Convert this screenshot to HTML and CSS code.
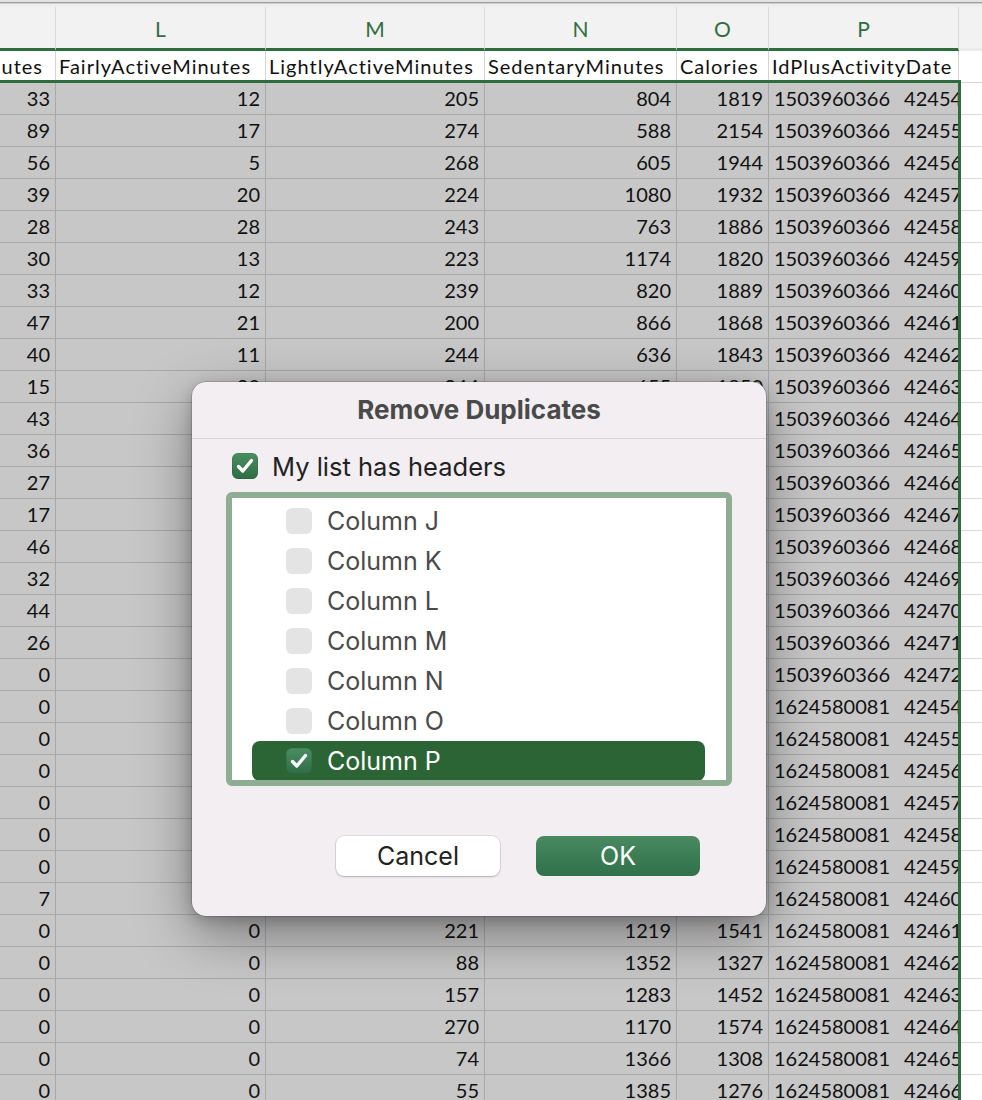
FILE: index.html
```html
<!DOCTYPE html>
<html>
<head>
<meta charset="utf-8">
<link rel="stylesheet" href="styles.css">
</head>
<body>
<div class="app">
  <div class="topstrip"></div>
  <div class="grid colheads">
    <div class="ch sel">K</div>
    <div class="ch sel">L</div>
    <div class="ch sel">M</div>
    <div class="ch sel">N</div>
    <div class="ch sel">O</div>
    <div class="ch sel">P</div>
    <div class="ch q"></div>
  </div>
  <div class="sheet">
    <div class="grid row hdr">
      <div class="c k"><span>VeryActiveMinutes</span></div>
      <div class="c">FairlyActiveMinutes</div>
      <div class="c">LightlyActiveMinutes</div>
      <div class="c">SedentaryMinutes</div>
      <div class="c">Calories</div>
      <div class="c">IdPlusActivityDate</div>
      <div class="c q"></div>
    </div>
    <div class="grid row"><div class="c n">33</div><div class="c n">12</div><div class="c n">205</div><div class="c n">804</div><div class="c n">1819</div><div class="c t">1503960366 424540</div><div class="c q"></div></div>
    <div class="grid row"><div class="c n">89</div><div class="c n">17</div><div class="c n">274</div><div class="c n">588</div><div class="c n">2154</div><div class="c t">1503960366 424550</div><div class="c q"></div></div>
    <div class="grid row"><div class="c n">56</div><div class="c n">5</div><div class="c n">268</div><div class="c n">605</div><div class="c n">1944</div><div class="c t">1503960366 424560</div><div class="c q"></div></div>
    <div class="grid row"><div class="c n">39</div><div class="c n">20</div><div class="c n">224</div><div class="c n">1080</div><div class="c n">1932</div><div class="c t">1503960366 424570</div><div class="c q"></div></div>
    <div class="grid row"><div class="c n">28</div><div class="c n">28</div><div class="c n">243</div><div class="c n">763</div><div class="c n">1886</div><div class="c t">1503960366 424580</div><div class="c q"></div></div>
    <div class="grid row"><div class="c n">30</div><div class="c n">13</div><div class="c n">223</div><div class="c n">1174</div><div class="c n">1820</div><div class="c t">1503960366 424590</div><div class="c q"></div></div>
    <div class="grid row"><div class="c n">33</div><div class="c n">12</div><div class="c n">239</div><div class="c n">820</div><div class="c n">1889</div><div class="c t">1503960366 424600</div><div class="c q"></div></div>
    <div class="grid row"><div class="c n">47</div><div class="c n">21</div><div class="c n">200</div><div class="c n">866</div><div class="c n">1868</div><div class="c t">1503960366 424610</div><div class="c q"></div></div>
    <div class="grid row"><div class="c n">40</div><div class="c n">11</div><div class="c n">244</div><div class="c n">636</div><div class="c n">1843</div><div class="c t">1503960366 424620</div><div class="c q"></div></div>
    <div class="grid row"><div class="c n">15</div><div class="c n">30</div><div class="c n">244</div><div class="c n">655</div><div class="c n">1850</div><div class="c t">1503960366 424630</div><div class="c q"></div></div>
    <div class="grid row"><div class="c n">43</div><div class="c n">10</div><div class="c n">277</div><div class="c n">700</div><div class="c n">2030</div><div class="c t">1503960366 424640</div><div class="c q"></div></div>
    <div class="grid row"><div class="c n">36</div><div class="c n">20</div><div class="c n">215</div><div class="c n">752</div><div class="c n">1860</div><div class="c t">1503960366 424650</div><div class="c q"></div></div>
    <div class="grid row"><div class="c n">27</div><div class="c n">19</div><div class="c n">274</div><div class="c n">806</div><div class="c n">1991</div><div class="c t">1503960366 424660</div><div class="c q"></div></div>
    <div class="grid row"><div class="c n">17</div><div class="c n">14</div><div class="c n">213</div><div class="c n">1196</div><div class="c n">1843</div><div class="c t">1503960366 424670</div><div class="c q"></div></div>
    <div class="grid row"><div class="c n">46</div><div class="c n">13</div><div class="c n">277</div><div class="c n">731</div><div class="c n">1944</div><div class="c t">1503960366 424680</div><div class="c q"></div></div>
    <div class="grid row"><div class="c n">32</div><div class="c n">19</div><div class="c n">252</div><div class="c n">805</div><div class="c n">1991</div><div class="c t">1503960366 424690</div><div class="c q"></div></div>
    <div class="grid row"><div class="c n">44</div><div class="c n">17</div><div class="c n">238</div><div class="c n">715</div><div class="c n">1855</div><div class="c t">1503960366 424700</div><div class="c q"></div></div>
    <div class="grid row"><div class="c n">26</div><div class="c n">44</div><div class="c n">240</div><div class="c n">730</div><div class="c n">1810</div><div class="c t">1503960366 424710</div><div class="c q"></div></div>
    <div class="grid row"><div class="c n">0</div><div class="c n">0</div><div class="c n">0</div><div class="c n">1440</div><div class="c n">1364</div><div class="c t">1503960366 424720</div><div class="c q"></div></div>
    <div class="grid row"><div class="c n">0</div><div class="c n">0</div><div class="c n">217</div><div class="c n">1223</div><div class="c n">1432</div><div class="c t">1624580081 424540</div><div class="c q"></div></div>
    <div class="grid row"><div class="c n">0</div><div class="c n">0</div><div class="c n">123</div><div class="c n">1317</div><div class="c n">1411</div><div class="c t">1624580081 424550</div><div class="c q"></div></div>
    <div class="grid row"><div class="c n">0</div><div class="c n">0</div><div class="c n">116</div><div class="c n">1324</div><div class="c n">1233</div><div class="c t">1624580081 424560</div><div class="c q"></div></div>
    <div class="grid row"><div class="c n">0</div><div class="c n">0</div><div class="c n">158</div><div class="c n">1282</div><div class="c n">1440</div><div class="c t">1624580081 424570</div><div class="c q"></div></div>
    <div class="grid row"><div class="c n">0</div><div class="c n">0</div><div class="c n">135</div><div class="c n">1305</div><div class="c n">1320</div><div class="c t">1624580081 424580</div><div class="c q"></div></div>
    <div class="grid row"><div class="c n">0</div><div class="c n">0</div><div class="c n">103</div><div class="c n">1337</div><div class="c n">1291</div><div class="c t">1624580081 424590</div><div class="c q"></div></div>
    <div class="grid row"><div class="c n">7</div><div class="c n">0</div><div class="c n">211</div><div class="c n">1222</div><div class="c n">1573</div><div class="c t">1624580081 424600</div><div class="c q"></div></div>
    <div class="grid row"><div class="c n">0</div><div class="c n">0</div><div class="c n">221</div><div class="c n">1219</div><div class="c n">1541</div><div class="c t">1624580081 424610</div><div class="c q"></div></div>
    <div class="grid row"><div class="c n">0</div><div class="c n">0</div><div class="c n">88</div><div class="c n">1352</div><div class="c n">1327</div><div class="c t">1624580081 424620</div><div class="c q"></div></div>
    <div class="grid row"><div class="c n">0</div><div class="c n">0</div><div class="c n">157</div><div class="c n">1283</div><div class="c n">1452</div><div class="c t">1624580081 424630</div><div class="c q"></div></div>
    <div class="grid row"><div class="c n">0</div><div class="c n">0</div><div class="c n">270</div><div class="c n">1170</div><div class="c n">1574</div><div class="c t">1624580081 424640</div><div class="c q"></div></div>
    <div class="grid row"><div class="c n">0</div><div class="c n">0</div><div class="c n">74</div><div class="c n">1366</div><div class="c n">1308</div><div class="c t">1624580081 424650</div><div class="c q"></div></div>
    <div class="grid row"><div class="c n">0</div><div class="c n">0</div><div class="c n">55</div><div class="c n">1385</div><div class="c n">1276</div><div class="c t">1624580081 424660</div><div class="c q"></div></div>
    <div class="selection"></div>
  </div>

  <div class="dialog">
    <div class="dlg-title">Remove Duplicates</div>
    <div class="dlg-body">
      <label class="hdr-check">
        <span class="cb on"><svg viewBox="0 0 26 26" width="26" height="26"><path d="M6.5 13.5 L10.8 18 L19.5 7.5" fill="none" stroke="#fff" stroke-width="3.4" stroke-linecap="round" stroke-linejoin="round"/></svg></span>
        <span>My list has headers</span>
      </label>
      <div class="listbox">
        <div class="item"><span class="cb"></span><span>Column J</span></div>
        <div class="item"><span class="cb"></span><span>Column K</span></div>
        <div class="item"><span class="cb"></span><span>Column L</span></div>
        <div class="item"><span class="cb"></span><span>Column M</span></div>
        <div class="item"><span class="cb"></span><span>Column N</span></div>
        <div class="item"><span class="cb"></span><span>Column O</span></div>
        <div class="item active"><span class="cb on"><svg viewBox="0 0 26 26" width="26" height="26"><path d="M6.5 13.5 L10.8 18 L19.5 7.5" fill="none" stroke="#fff" stroke-width="3.4" stroke-linecap="round" stroke-linejoin="round"/></svg></span><span>Column P</span></div>
      </div>
      <div class="buttons">
        <button class="btn cancel">Cancel</button>
        <button class="btn ok">OK</button>
      </div>
    </div>
  </div>
</div>
</body>
</html>
```

FILE: styles.css
```css
* { box-sizing: border-box; }
html, body { margin: 0; padding: 0; }
body {
  width: 982px;
  height: 1100px;
  overflow: hidden;
  background: #ffffff;
}
.app {
  position: relative;
  width: 982px;
  height: 1100px;
  overflow: hidden;
  font-family: "Lato", "Open Sans", sans-serif;
}
.topstrip {
  height: 7px;
  background: #eeeeee;
  border-top: 2px solid #e2e2e2;
  box-shadow: inset 0 1px 0 #9d9d9d, inset 0 2px 0 #cfcfcf;
}
.grid {
  display: grid;
  grid-template-columns: 201px 210px 219px 192px 92px 190px 1fr;
  margin-left: -145px;
  width: calc(100% + 145px);
}
.colheads {
  height: 44px;
  background: #f2f2f2;
}
.ch {
  display: flex;
  align-items: center;
  justify-content: center;
  color: #2f6e41;
  font-size: 21px;
  border-right: 1px solid #dadada;
  border-bottom: 3px solid #2f6b3f;
  padding-top: 1px;
}
.ch.q {
  border-right: none;
  border-bottom: 3px solid #ebebeb;
}
.sheet {
  position: relative;
}
.row {
  height: 32px;
}
.c {
  height: 32px;
  display: flex;
  align-items: center;
  background: #c7c7c7;
  border-right: 1px solid #a8a8a8;
  border-bottom: 1px solid #a8a8a8;
  font-size: 20px;
  color: #111;
  white-space: nowrap;
  overflow: hidden;
  padding: 0 4px 1px 4px;
}
.c.n { justify-content: flex-end; padding-right: 5px; }
.c.t { padding-left: 5px; word-spacing: 9px; }
.c.q {
  background: #ffffff;
  border-right: none;
  border-bottom: 1px solid #d9d9d9;
}
.hdr .c {
  background: #ffffff;
  border-right: 1px solid #d4d4d4;
  border-bottom: 1px solid #d4d4d4;
  padding-left: 3px;
  letter-spacing: 1px;
}
.hdr .c.q { border-right: none; }
.hdr .c.k { justify-content: flex-end; padding-right: 12px; }
.selection {
  position: absolute;
  left: -10px;
  top: 29px;
  width: 971px;
  height: 1200px;
  border: 3px solid #2f6b3f;
  pointer-events: none;
}

/* dialog */
.dialog {
  position: absolute;
  left: 192px;
  top: 382px;
  width: 574px;
  height: 534px;
  background: #f2eef2;
  border-radius: 14px;
  box-shadow: 0 0 0 0.5px rgba(0,0,0,0.28), 0 18px 55px rgba(0,0,0,0.4), 0 4px 14px rgba(0,0,0,0.2);
  font-family: "Inter", "Roboto", sans-serif;
  display: flex;
  flex-direction: column;
}
.dlg-title {
  height: 57px;
  display: flex;
  align-items: center;
  justify-content: center;
  font-weight: 700;
  font-size: 26px;
  color: #4a4a4a;
  border-bottom: 1px solid #d7d3d7;
  padding-bottom: 2px;
}
.dlg-body {
  padding: 14px 34px 0 34px;
  display: flex;
  flex-direction: column;
}
.hdr-check {
  display: flex;
  align-items: center;
  gap: 14px;
  padding-left: 6px;
  font-size: 25.5px;
  color: #222222;
  height: 26px;
}
.cb {
  width: 26px;
  height: 26px;
  border-radius: 6px;
  background: #e4e4e4;
  flex: none;
  display: flex;
  align-items: center;
  justify-content: center;
}
.cb.on {
  background: linear-gradient(#4b8e62, #2f6d44);
  box-shadow: inset 0 0 0 0.5px rgba(0,0,0,0.15);
}
.cb svg { display: block; }
.listbox {
  margin-top: 13px;
  width: 506px;
  height: 294px;
  border: 6px solid #8fad92;
  border-radius: 6px;
  background: #ffffff;
  overflow: hidden;
  padding: 3px 21px 0 20px;
}
.item {
  height: 40px;
  display: flex;
  align-items: center;
  gap: 15px;
  padding-left: 34px;
  font-size: 25px;
  color: #4a4a4a;
  border-radius: 8px;
}
.item.active {
  background: #2b6536;
  color: #ffffff;
}
.buttons {
  margin-top: 50px;
  display: flex;
  justify-content: flex-end;
  gap: 36px;
  padding-right: 32px;
}
.btn {
  width: 164px;
  height: 40px;
  border: none;
  border-radius: 8px;
  font-family: "Inter", "Roboto", sans-serif;
  font-size: 25px;
  padding: 0 0 1px 0;
}
.btn.cancel {
  background: #ffffff;
  color: #222222;
  box-shadow: 0 0 0 0.5px rgba(0,0,0,0.14), 0 1px 2px rgba(0,0,0,0.22);
}
.btn.ok {
  background: linear-gradient(#4a8a61, #30704a);
  color: #ffffff;
}
```
